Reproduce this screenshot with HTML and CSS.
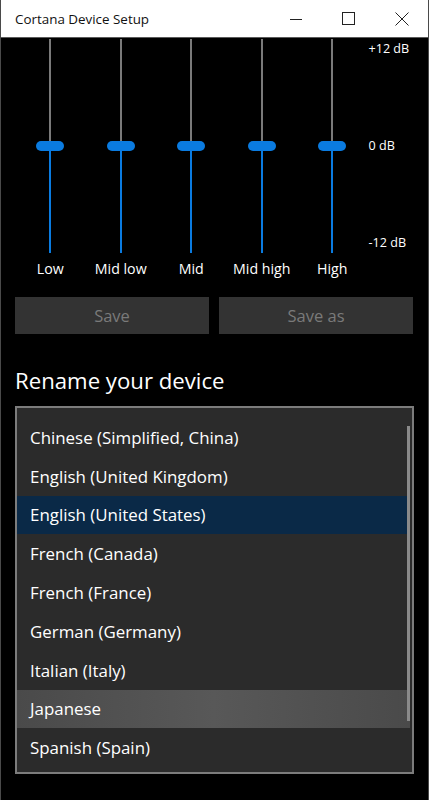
FILE: index.html
```html
<!DOCTYPE html>
<html lang="en">
<head>
    <meta charset="UTF-8">
    <meta name="viewport" content="width=device-width, initial-scale=1.0">
    <title>Cortana Device Setup</title>
    <link rel="stylesheet" href="styles.css">
</head>
<body>
    <div class="window">
        <header class="titlebar">
            <span class="title">Cortana Device Setup</span>
            <div class="controls">
                <span class="ctl"><svg width="12" height="12" viewBox="0 0 12 12"><path d="M0 6.5h12" stroke="#222" stroke-width="1"/></svg></span>
                <span class="ctl"><svg width="13" height="13" viewBox="0 0 13 13"><rect x="0.5" y="0.5" width="12" height="12" fill="none" stroke="#222" stroke-width="1"/></svg></span>
                <span class="ctl"><svg width="14" height="14" viewBox="0 0 14 14"><path d="M0.5 0.5l13 13M13.5 0.5l-13 13" stroke="#222" stroke-width="1"/></svg></span>
            </div>
        </header>

        <main class="content">
            <section class="eq">
                <div class="bands">
                    <div class="band">
                        <div class="slider"><div class="track-top"></div><div class="thumb"></div><div class="track-bottom"></div></div>
                        <span class="band-label">Low</span>
                    </div>
                    <div class="band">
                        <div class="slider"><div class="track-top"></div><div class="thumb"></div><div class="track-bottom"></div></div>
                        <span class="band-label">Mid low</span>
                    </div>
                    <div class="band">
                        <div class="slider"><div class="track-top"></div><div class="thumb"></div><div class="track-bottom"></div></div>
                        <span class="band-label">Mid</span>
                    </div>
                    <div class="band">
                        <div class="slider"><div class="track-top"></div><div class="thumb"></div><div class="track-bottom"></div></div>
                        <span class="band-label">Mid high</span>
                    </div>
                    <div class="band">
                        <div class="slider"><div class="track-top"></div><div class="thumb"></div><div class="track-bottom"></div></div>
                        <span class="band-label">High</span>
                    </div>
                </div>
                <div class="scale">
                    <span>+12 dB</span>
                    <span>0 dB</span>
                    <span>-12 dB</span>
                </div>
            </section>

            <div class="actions">
                <button class="btn" disabled>Save</button>
                <button class="btn" disabled>Save as</button>
            </div>

            <h2 class="heading">Rename your device</h2>

            <div class="listbox">
                <ul class="items">
                    <li>Chinese (Simplified, China)</li>
                    <li>English (United Kingdom)</li>
                    <li class="selected">English (United States)</li>
                    <li>French (Canada)</li>
                    <li>French (France)</li>
                    <li>German (Germany)</li>
                    <li>Italian (Italy)</li>
                    <li class="hover">Japanese</li>
                    <li>Spanish (Spain)</li>
                </ul>
                <div class="scrollbar"></div>
            </div>
        </main>
    </div>
</body>
</html>
```

FILE: styles.css
```css
body {
    margin: 0;
    font-family: "Open Sans", "Noto Sans", sans-serif;
    background-color: #000;
}
.window {
    width: 429px;
    height: 800px;
    box-sizing: border-box;
    border-left: 1px solid #4a4a4a;
    border-right: 1px solid #4a4a4a;
    display: flex;
    flex-direction: column;
    background-color: #000;
}
.titlebar {
    height: 38px;
    flex-shrink: 0;
    background-color: #fff;
    border-bottom: 1px solid #5a5a5a;
    box-sizing: border-box;
    display: flex;
    align-items: center;
    justify-content: space-between;
    padding-left: 14px;
}
.title {
    font-size: 13.4px;
    color: #111;
}
.controls {
    display: flex;
    height: 100%;
}
.ctl {
    width: 53px;
    display: flex;
    align-items: center;
    justify-content: center;
}
.content {
    padding: 1px 14px 0;
    color: #fff;
}
.eq {
    display: flex;
}
.bands {
    display: flex;
}
.band {
    width: 70.5px;
    display: flex;
    flex-direction: column;
    align-items: center;
}
.slider {
    height: 214px;
    display: flex;
    flex-direction: column;
    align-items: center;
}
.track-top {
    width: 2px;
    flex: 1;
    background-color: #7a7a7a;
}
.thumb {
    width: 28px;
    height: 10px;
    border-radius: 5px;
    background-color: #0a7be0;
}
.track-bottom {
    width: 2px;
    flex: 1;
    background-color: #0a7be0;
}
.band-label {
    margin-top: 6px;
    font-size: 14.2px;
    line-height: 20px;
}
.scale {
    height: 214px;
    display: flex;
    flex-direction: column;
    justify-content: space-between;
    padding-left: 1px;
    font-size: 12.6px;
    line-height: 20px;
}
.actions {
    display: grid;
    grid-template-columns: 1fr 1fr;
    gap: 10px;
    margin-top: 18px;
    padding-right: 1px;
}
.btn {
    height: 37px;
    border: none;
    background-color: #333;
    color: #7a7a7a;
    font-family: inherit;
    font-size: 16.5px;
}
.heading {
    margin: 32px 0 0;
    font-weight: normal;
    font-size: 22.2px;
    line-height: 30px;
}
.listbox {
    margin-top: 10px;
    height: 368px;
    box-sizing: border-box;
    border: 2px solid #7c7c7c;
    background-color: #2b2b2b;
    display: flex;
    padding-top: 10px;
}
.items {
    list-style: none;
    margin: 0;
    padding: 0;
    flex: 1;
}
.items li {
    height: 38.8px;
    display: flex;
    align-items: center;
    padding-left: 13px;
    font-size: 16.9px;
}
.items .selected {
    background-color: #0a2947;
}
.items .hover {
    background: linear-gradient(90deg, #4a4a4a, #585858 50%, #4a4a4a);
    margin-right: -3px;
}
.scrollbar {
    width: 3px;
    height: 295px;
    margin: 8px 2px 0 0;
    background-color: #8a8a8a;
}
```
